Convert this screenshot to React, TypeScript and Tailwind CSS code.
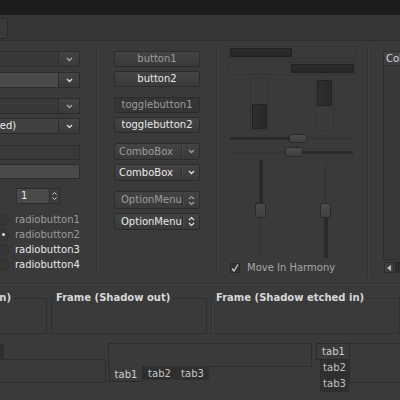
import React from "react";

function Chevron({ color = "#bdbdbd" }: { color?: string }) {
    return (
        <svg width="7" height="5" viewBox="0 0 7 5">
            <polyline points="1,1 3.5,3.5 6,1" fill="none" stroke={color} strokeWidth="1.3" />
        </svg>
    );
}

function UpDown({ color = "#bdbdbd" }: { color?: string }) {
    return (
        <svg width="7" height="11" viewBox="0 0 7 11">
            <polyline points="1,4 3.5,1.5 6,4" fill="none" stroke={color} strokeWidth="1.2" />
            <polyline points="1,7 3.5,9.5 6,7" fill="none" stroke={color} strokeWidth="1.2" />
        </svg>
    );
}

function Combo({ bg = "bg-[#393939]", bright, children }: { bg?: string; bright?: boolean; children?: React.ReactNode }) {
    return (
        <div className="flex h-[16px]">
            <div className={`flex-1 flex items-center overflow-hidden border border-[#2c2c2c] ${bg}`}>{children}</div>
            <div className="w-[21px] flex items-center justify-center border border-l-0 border-[#2c2c2c] bg-gradient-to-b from-[#434343] to-[#3a3a3a]">
                <Chevron color={bright ? "#dedede" : "#a8a8a8"} />
            </div>
        </div>
    );
}

function Button({ label, dim, dark, className = "" }: { label: string; dim?: boolean; dark?: boolean; className?: string }) {
    return (
        <div
            className={`h-[16px] flex items-center justify-center rounded-[2px] border border-[#2c2c2c] ${
                dark ? "bg-[#353535]" : "bg-gradient-to-b from-[#444444] to-[#3a3a3a]"
            } ${dim ? "text-[#9c9c9c]" : "text-[#e8e8e8]"} ${className}`}
        >
            {label}
        </div>
    );
}

function ComboBox({ label, dim, option, className = "" }: { label: string; dim?: boolean; option?: boolean; className?: string }) {
    const c = dim ? "#a0a0a0" : "#e0e0e0";
    return (
        <div
            className={`h-[17px] flex items-center rounded-[2px] border border-[#2c2c2c] bg-gradient-to-b from-[#434343] to-[#3a3a3a] ${
                dim ? "text-[#9c9c9c]" : "text-[#e8e8e8]"
            } ${className}`}
        >
            <span className={`flex-1 ${option ? "pl-[6px]" : "pl-[4px]"}`}>{label}</span>
            <div className="w-px h-[11px] bg-[#2c2c2c] border-r border-[#4a4a4a] box-content" />
            <div className="w-[16px] flex items-center justify-center">
                {option ? <UpDown color={c} /> : <Chevron color={c} />}
            </div>
        </div>
    );
}

function Radio({ label, checked, dim }: { label: string; checked?: boolean; dim?: boolean }) {
    return (
        <div className="h-[15px] flex items-center">
            <div className="ml-[17px] w-[12px] h-[12px] rounded-full border border-[#303030] bg-[#363636] flex items-center justify-center">
                {checked && <div className="w-[3px] h-[3px] rounded-full bg-[#e0e0e0]" />}
            </div>
            <span className={`ml-[6px] ${dim ? "text-[#9c9c9c]" : "text-[#e8e8e8]"}`}>{label}</span>
        </div>
    );
}

function VSep() {
    return <div className="shrink-0 self-start mt-[4px] h-[232px] w-[2px] border-l border-[#323232] border-r border-r-[#414141]" />;
}

function Slider({ w }: { w: string }) {
    return <div className={`${w} rounded-[2px] border border-[#2a2a2a] bg-gradient-to-b from-[#4c4c4c] to-[#404040]`} />;
}

export default function App() {
    return (
        <div className="w-[400px] h-[400px] overflow-hidden bg-[#3a3a3a] font-['DejaVu_Sans',sans-serif] text-[10px] leading-none text-[#e8e8e8]">
            {/* title strip */}
            <div className="h-[15px] bg-[#1d1d1d]" />

            {/* toolbar */}
            <div className="h-[26px] bg-[#363636] border-b border-[#2f2f2f] flex items-start">
                <div className="-ml-[22px] mt-[3px] w-[30px] h-[21px] rounded-[3px] border border-[#2a2a2a] bg-[#3a3a3a]" />
            </div>

            {/* main widget area */}
            <div className="h-[242px] flex">
                {/* entries & radios */}
                <div className="shrink-0 -ml-[20px] w-[100px] flex flex-col">
                    <div className="mt-[10px]">
                        <Combo />
                    </div>
                    <div className="mt-[5px]">
                        <Combo bg="bg-[#4a4a4a]" bright />
                    </div>
                    <div className="mt-[10px]">
                        <Combo />
                    </div>
                    <div className="mt-[4px]">
                        <Combo bg="bg-[#414141]" bright>
                            <span className="-ml-[16px] whitespace-nowrap">(Disabled)</span>
                        </Combo>
                    </div>
                    <div className="mt-[11px] h-[15px] border border-[#2c2c2c] bg-[#393939]" />
                    <div className="mt-[4px] h-[15px] border border-[#2c2c2c] bg-[#4a4a4a]" />
                    <div className="mt-[9px] ml-[36px] w-[44px] h-[16px] flex">
                        <div className="w-[34px] border border-[#2c2c2c] bg-[#4a4a4a] flex items-center pl-[4px]">1</div>
                        <div className="w-[10px] border border-l-0 border-[#2c2c2c] bg-[#3c3c3c] flex flex-col items-center justify-center gap-[2px]">
                            <svg width="5" height="3" viewBox="0 0 5 3">
                                <polyline points="0.5,2.5 2.5,0.5 4.5,2.5" fill="none" stroke="#d0d0d0" strokeWidth="1" />
                            </svg>
                            <svg width="5" height="3" viewBox="0 0 5 3">
                                <polyline points="0.5,0.5 2.5,2.5 4.5,0.5" fill="none" stroke="#d0d0d0" strokeWidth="1" />
                            </svg>
                        </div>
                    </div>
                    <div className="mt-[8px] flex flex-col">
                        <Radio label="radiobutton1" dim />
                        <Radio label="radiobutton2" dim checked />
                        <Radio label="radiobutton3" />
                        <Radio label="radiobutton4" />
                    </div>
                </div>

                <div className="ml-[16px] flex">
                    <VSep />
                </div>

                {/* buttons */}
                <div className="shrink-0 ml-[16px] w-[86px] flex flex-col">
                    <Button label="button1" dim className="mt-[10px]" />
                    <Button label="button2" className="mt-[4px]" />
                    <Button label="togglebutton1" dim dark className="mt-[10px]" />
                    <Button label="togglebutton2" className="mt-[4px]" />
                    <ComboBox label="ComboBox" dim className="mt-[10px]" />
                    <ComboBox label="ComboBox" className="mt-[4px]" />
                    <ComboBox label="OptionMenu" dim option className="mt-[10px] h-[18px]" />
                    <ComboBox label="OptionMenu" option className="mt-[4px]" />
                </div>

                <div className="ml-[16px] flex">
                    <VSep />
                </div>

                {/* progress & scales */}
                <div className="shrink-0 ml-[10px] w-[128px] flex flex-col">
                    <div className="mt-[5px] h-[13px] border border-[#343434] p-[1px] flex">
                        <div className="w-[62px] border border-[#222222] bg-gradient-to-b from-[#2e2e2e] to-[#262626]" />
                    </div>
                    <div className="mt-[3px] h-[13px] border border-[#343434] p-[1px] flex justify-end">
                        <div className="w-[63px] border border-[#222222] bg-gradient-to-b from-[#2e2e2e] to-[#262626]" />
                    </div>
                    <div className="mt-[3px] h-[53px] flex">
                        <div className="ml-[22px] w-[19px] border border-[#343434] p-[1px] flex flex-col justify-end">
                            <div className="h-[25px] border border-[#222222] bg-gradient-to-r from-[#2e2e2e] to-[#282828]" />
                        </div>
                        <div className="ml-[46px] w-[19px] border border-[#343434] p-[1px] flex flex-col">
                            <div className="h-[26px] border border-[#222222] bg-gradient-to-r from-[#2e2e2e] to-[#282828]" />
                        </div>
                    </div>
                    {/* hscale 1 */}
                    <div className="mt-[3px] h-[9px] ml-[2px] w-[123px] flex items-center">
                        <div className="w-[59px] h-[3px] bg-[#2a2a2a]" />
                        <Slider w="w-[18px] h-[9px]" />
                        <div className="flex-1 h-[3px] bg-[#363636]" />
                    </div>
                    {/* hscale 2 */}
                    <div className="mt-[4px] h-[10px] ml-[2px] w-[123px] flex items-center">
                        <div className="w-[55px] h-[3px] bg-[#363636]" />
                        <Slider w="w-[18px] h-[10px]" />
                        <div className="flex-1 h-[3px] bg-[#2a2a2a]" />
                    </div>
                    {/* vscales */}
                    <div className="mt-[3px] h-[98px] flex">
                        <div className="ml-[27px] w-[11px] flex flex-col items-center">
                            <div className="w-[4px] h-[43px] bg-[#2a2a2a]" />
                            <Slider w="w-[11px] h-[15px]" />
                            <div className="w-[3px] flex-1 bg-[#363636]" />
                        </div>
                        <div className="ml-[54px] w-[11px] flex flex-col items-center">
                            <div className="w-[3px] h-[40px] mt-[3px] bg-[#363636]" />
                            <Slider w="w-[11px] h-[15px]" />
                            <div className="w-[4px] flex-1 bg-[#2a2a2a]" />
                        </div>
                    </div>
                    <div className="mt-[4px] h-[11px] flex items-center">
                        <div className="ml-[2px] w-[10px] h-[10px] border border-[#2a2a2a] bg-[#333333] flex items-center justify-center">
                            <svg width="8" height="8" viewBox="0 0 8 8">
                                <polyline points="1,4.5 3,7 7,0.5" fill="none" stroke="#cfcfcf" strokeWidth="1.3" />
                            </svg>
                        </div>
                        <span className="ml-[7px] text-[#a8a8a8] whitespace-nowrap">Move In Harmony</span>
                    </div>
                </div>

                <div className="ml-[11px] flex">
                    <VSep />
                </div>

                {/* tree view */}
                <div className="shrink-0 ml-[14px] w-[60px] flex flex-col">
                    <div className="mt-[10px] h-[209px] border border-[#2e2e2e] bg-[#383838] flex flex-col">
                        <div className="h-[14px] bg-gradient-to-b from-[#434343] to-[#3c3c3c] border-b border-[#2e2e2e] flex items-center pl-[2px] text-[#d8d8d8] whitespace-nowrap">
                            Column
                        </div>
                    </div>
                    <div className="mt-[2px] h-[11px] flex">
                        <div className="ml-[1px] w-[10px] border border-[#2c2c2c] bg-[#3e3e3e] flex items-center justify-center">
                            <svg width="4" height="6" viewBox="0 0 4 6">
                                <polygon points="4,0 4,6 0,3" fill="#bdbdbd" />
                            </svg>
                        </div>
                        <div className="ml-[1px] flex-1 bg-[#2b2b2b]" />
                    </div>
                </div>
            </div>

            {/* horizontal separator */}
            <div className="h-[2px] border-t border-[#323232] border-b border-b-[#414141]" />

            {/* frames */}
            <div className="mt-[8px] flex">
                <fieldset className="shrink-0 -ml-[100px] w-[147px] h-[41px] border border-[#2e2e2e]">
                    <legend className="ml-[2px] px-[2px] font-bold text-[#d8d8d8] whitespace-nowrap">Frame (Shadow in)</legend>
                </fieldset>
                <fieldset className="shrink-0 ml-[4px] w-[156px] h-[41px] border border-[#2e2e2e]">
                    <legend className="ml-[2px] px-[2px] font-bold text-[#d8d8d8] whitespace-nowrap">Frame (Shadow out)</legend>
                </fieldset>
                <fieldset className="shrink-0 ml-[4px] w-[189px] h-[41px] border border-[#303030] shadow-[inset_1px_1px_0_#424242]">
                    <legend className="ml-[2px] px-[2px] font-bold text-[#d8d8d8] whitespace-nowrap">Frame (Shadow etched in)</legend>
                </fieldset>
            </div>

            {/* notebooks */}
            <div className="mt-[9px] flex items-start">
                {/* tabs on top */}
                <div className="shrink-0 -ml-[100px] w-[206px] flex flex-col">
                    <div className="h-[16px] flex items-end pl-[2px]">
                        <div className="w-[34px] h-[15px] border border-b-0 border-[#2c2c2c] bg-[#3a3a3a]" />
                        <div className="w-[34px] h-[15px] border border-b-0 border-[#2c2c2c] bg-[#2f2f2f]" />
                        <div className="w-[34px] h-[15px] border border-b-0 border-[#2c2c2c] bg-[#2f2f2f]" />
                    </div>
                    <div className="h-[24px] border border-[#2e2e2e]" />
                </div>

                {/* tabs on bottom */}
                <div className="shrink-0 ml-[2px] w-[204px] flex flex-col">
                    <div className="h-[24px] border border-[#2e2e2e]" />
                    <div className="flex items-start pl-[1px]">
                        <div className="-mt-px w-[34px] h-[16px] pt-[2px] border border-t-0 border-[#2a2a2a] bg-[#3a3a3a] flex items-center justify-center text-[#d0d0d0]">
                            tab1
                        </div>
                        <div className="w-[33px] h-[13px] bg-[#2f2f2f] flex items-center justify-center text-[#c4c4c4]">tab2</div>
                        <div className="w-[33px] h-[13px] bg-[#2f2f2f] flex items-center justify-center text-[#c4c4c4]">tab3</div>
                    </div>
                </div>

                {/* tabs on left */}
                <div className="shrink-0 ml-[3px] flex items-start">
                    <div className="w-[34px] flex flex-col items-end">
                        <div className="w-[34px] h-[17px] -mr-px border border-r-0 border-[#2a2a2a] bg-[#3a3a3a] flex items-center justify-center text-[#d0d0d0]">
                            tab1
                        </div>
                        <div className="w-[29px] h-[16px] bg-[#2f2f2f] flex items-center justify-center text-[#c4c4c4]">tab2</div>
                        <div className="w-[29px] h-[16px] bg-[#2f2f2f] flex items-center justify-center text-[#c4c4c4]">tab3</div>
                    </div>
                    <div className="w-[60px] h-[40px] border border-[#2e2e2e]" />
                </div>
            </div>
        </div>
    );
}
